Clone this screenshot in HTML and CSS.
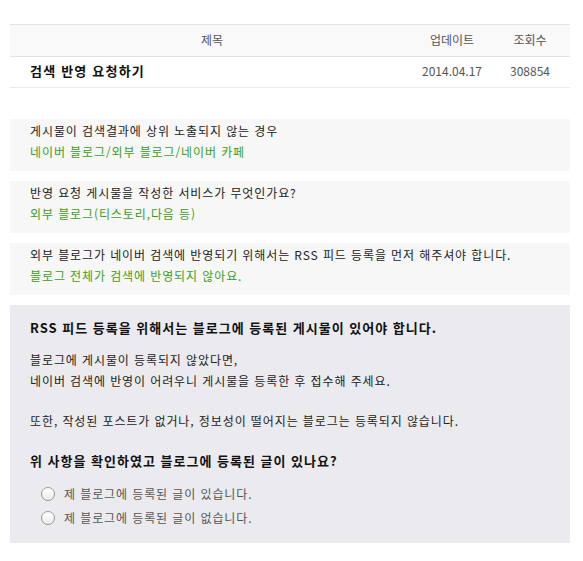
FILE: index.html
```html
<!DOCTYPE html>
<html lang="ko">
  <head>
    <meta charset="UTF-8" />
    <meta name="viewport" content="width=device-width, initial-scale=1.0" />
    <title>검색 반영 요청하기</title>
    <link rel="stylesheet" href="styles.css">
  </head>
  <body>
    <table class="board">
      <thead>
        <tr>
          <th class="col-title">제목</th>
          <th class="col-date">업데이트</th>
          <th class="col-hit">조회수</th>
        </tr>
      </thead>
      <tbody>
        <tr>
          <td class="subject">검색 반영 요청하기</td>
          <td class="num">2014.04.17</td>
          <td class="num">308854</td>
        </tr>
      </tbody>
    </table>

    <!-- 선택한 단계 -->
    <div class="step">
      <p class="q">게시물이 검색결과에 상위 노출되지 않는 경우</p>
      <p class="a">네이버 블로그/외부 블로그/네이버 카페</p>
    </div>

    <div class="step">
      <p class="q">반영 요청 게시물을 작성한 서비스가 무엇인가요?</p>
      <p class="a">외부 블로그(티스토리,다음 등)</p>
    </div>

    <div class="step">
      <p class="q">외부 블로그가 네이버 검색에 반영되기 위해서는 RSS 피드 등록을 먼저 해주셔야 합니다.</p>
      <p class="a">블로그 전체가 검색에 반영되지 않아요.</p>
    </div>

    <!-- 안내 및 확인 -->
    <div class="notice">
      <h4>RSS 피드 등록을 위해서는 블로그에 등록된 게시물이 있어야 합니다.</h4>
      <p class="desc">블로그에 게시물이 등록되지 않았다면,<br />네이버 검색에 반영이 어려우니 게시물을 등록한 후 접수해 주세요.</p>
      <p class="desc last">또한, 작성된 포스트가 없거나, 정보성이 떨어지는 블로그는 등록되지 않습니다.</p>
      <h4 class="ask">위 사항을 확인하였고 블로그에 등록된 글이 있나요?</h4>
      <ul class="choice">
        <li><label><input type="radio" name="has" /> 제 블로그에 등록된 글이 있습니다.</label></li>
        <li><label><input type="radio" name="has" /> 제 블로그에 등록된 글이 없습니다.</label></li>
      </ul>
    </div>
  </body>
</html>
```

FILE: styles.css
```css
body {
  font-family: "Noto Sans CJK KR", "Liberation Sans", sans-serif;
  font-size: 12px;
  color: #222;
  margin: 0;
  padding: 24px 10px 0;
}
p,
h4,
ul {
  margin: 0;
  padding: 0;
}
.board {
  width: 560px;
  border-collapse: collapse;
  table-layout: fixed;
}
.board th {
  height: 28px;
  padding: 0 0 3px;
  font-weight: normal;
  color: #555;
  background-color: #f9f9f9;
  border-top: 1px solid #e3e3e3;
  border-bottom: 1px solid #e3e3e3;
}
.board .col-title {
  width: 404px;
}
.board .col-date {
  width: 76px;
}
.board td {
  height: 27px;
  padding: 0 0 3px;
  border-bottom: 1px solid #eaeaea;
}
.board .subject {
  padding-left: 20px;
  font-size: 13px;
  font-weight: bold;
  letter-spacing: 1.2px;
  color: #111;
}
.board .num {
  text-align: center;
  color: #555;
}
.step {
  width: 520px;
  margin-top: 10px;
  padding: 1px 20px 9px;
  background-color: #f7f7f8;
  line-height: 21px;
  letter-spacing: 0.9px;
}
.board + .step {
  margin-top: 31px;
}
.step .a {
  color: #3c9d1b;
}
.notice {
  width: 520px;
  margin-top: 10px;
  padding: 12px 20px 13px;
  background-color: #ebebef;
  line-height: 21px;
  letter-spacing: 0.9px;
}
.notice h4 {
  font-size: 13px;
  letter-spacing: 1px;
  color: #111;
  margin-bottom: 11px;
}
.notice .desc {
  margin-bottom: 19px;
}
.notice .desc.last {
  margin-bottom: 19px;
}
.notice .ask {
  margin-bottom: 11px;
}
.choice {
  list-style: none;
  padding-left: 11px;
}
.choice li {
  height: 24px;
  line-height: 24px;
}
.choice label {
  display: flex;
  align-items: center;
  color: #555;
}
.choice input {
  appearance: none;
  width: 14px;
  height: 14px;
  margin: 0 9px 0 0;
  border: 1px solid #999;
  border-radius: 50%;
  background: linear-gradient(#fff, #ececec);
}
```
